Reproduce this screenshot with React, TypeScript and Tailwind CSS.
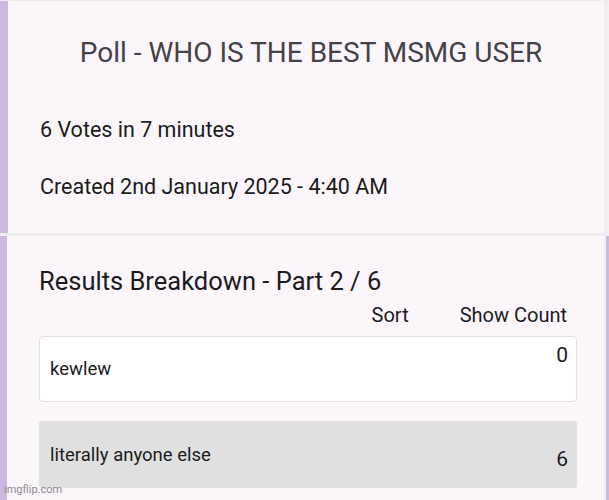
import React from "react";

export default function App() {
    return (
        <div
            className="w-[609px] h-[500px] overflow-hidden bg-[#efeef1] flex flex-col relative"
            style={{ fontFamily: "Roboto, 'Liberation Sans', sans-serif" }}
        >
            {/* Poll header card */}
            <div className="flex h-[232px] mt-[1px] mr-[5px]">
                <div className="w-[8px] bg-[#cdb8e0]" />
                <div className="flex-1 bg-[#faf6fa] flex flex-col">
                    <h1 className="text-[28px] text-[#454347] text-center pl-[10px] mt-[38px] leading-none">
                        Poll - WHO IS THE BEST MSMG USER
                    </h1>
                    <p className="text-[21.5px] text-[#1c1b1d] ml-[32px] mt-[52px] leading-none">
                        6 Votes in 7 minutes
                    </p>
                    <p className="text-[21.5px] text-[#1c1b1d] ml-[32px] mt-[35px] leading-none">
                        Created 2nd January 2025 - 4:40 AM
                    </p>
                </div>
            </div>

            {/* Results card */}
            <div className="flex flex-1 mt-[3px]">
                <div className="w-[7px] bg-[#cdb8e0]" />
                <div className="flex-1 bg-[#faf6fa] flex flex-col pl-[32px] pr-[27px]">
                    <h2 className="text-[25.5px] text-[#1c1b1d] mt-[33px] leading-none">
                        Results Breakdown - Part 2 / 6
                    </h2>
                    <div className="flex justify-end gap-[51px] pr-[10px] mt-[10px] text-[20px] text-[#1c1b1d] leading-none">
                        <span>Sort</span>
                        <span>Show Count</span>
                    </div>
                    <div className="mt-[11px] h-[66px] bg-white border border-[#e2e0e4] rounded-[4px] flex justify-between items-start pl-[10px] pr-[8px] leading-none text-[#1c1b1d]">
                        <span className="text-[18.5px] mt-[23px]">kewlew</span>
                        <span className="text-[21px] mt-[8px]">0</span>
                    </div>
                    <div className="mt-[19px] h-[67px] bg-[#e0e0e0] rounded-[3px] flex justify-between items-start pl-[11px] pr-[9px] leading-none text-[#1c1b1d]">
                        <span className="text-[18.5px] mt-[25px]">literally anyone else</span>
                        <span className="text-[21px] mt-[28px]">6</span>
                    </div>
                </div>
                <div className="w-[2px] bg-[#efeef1]" />
                <div className="w-[3px] bg-[#cdb8e0]" />
            </div>

            {/* watermark */}
            <span className="absolute left-[4px] bottom-[2px] text-[11px] text-[#8d8b90]">imgflip.com</span>
        </div>
    );
}
